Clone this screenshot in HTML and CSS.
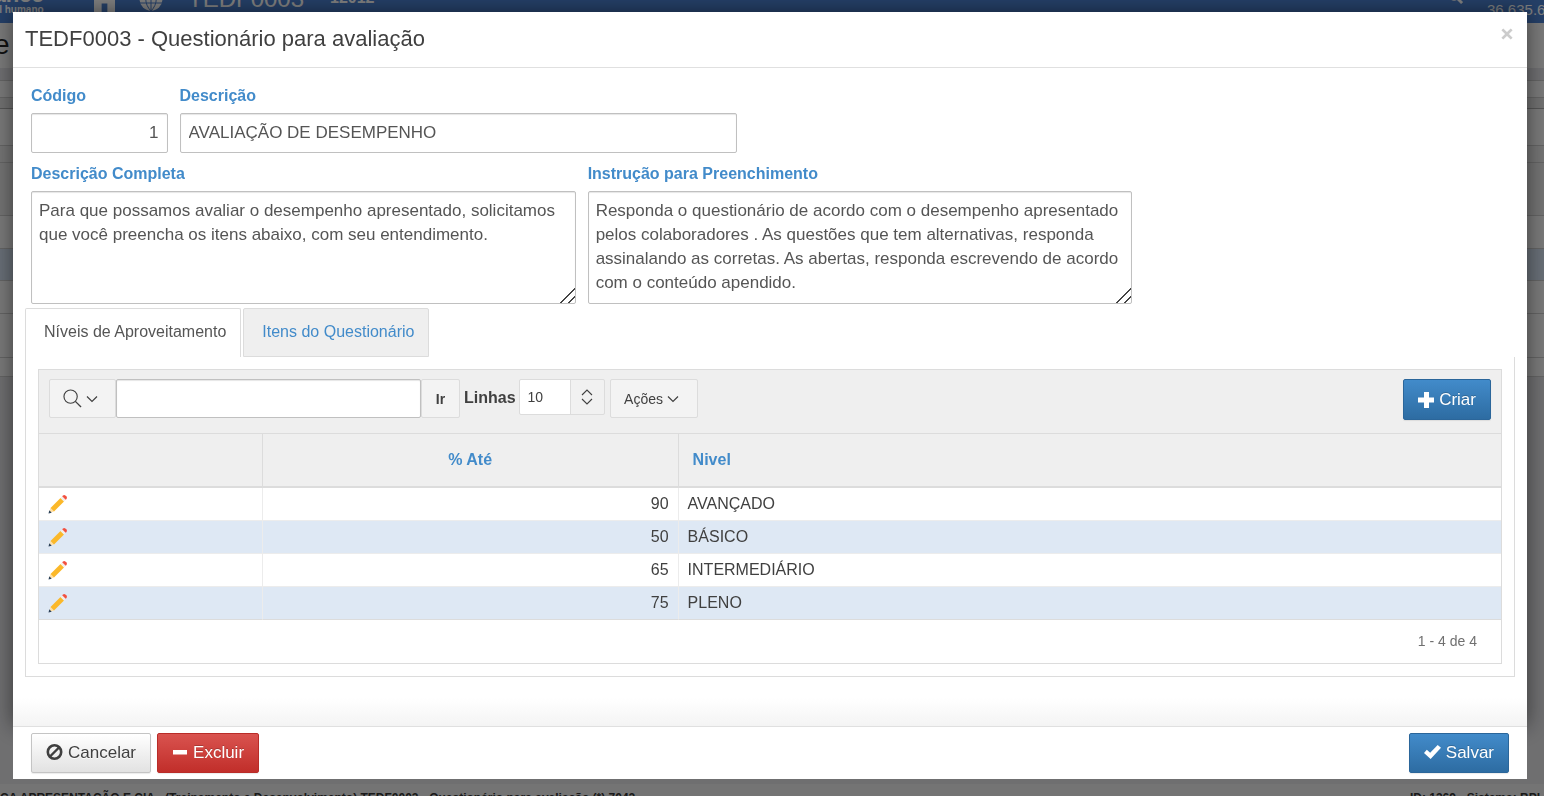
FILE: index.html
```html
<!DOCTYPE html>
<html lang="pt-BR">
<head>
<meta charset="utf-8">
<title>TEDF0003 - Questionário para avaliação</title>
<link rel="stylesheet" href="styles.css">
</head>
<body>
<svg class="sprite" aria-hidden="true">
  <symbol id="pencil" viewBox="0 0 20 20">
    <path d="M1 19l1.500-5L6 17.500z" fill="#ffdfa6"/>
    <path d="M2.500 14L12.500 4l3.500 3.500L6 17.500z" fill="#fbb829"/>
    <path d="M12.500 4l1.700-1.700 3.500 3.500L16 7.500z" fill="#f3eee8"/>
    <path d="M14.200 2.300l.8-.8q1.200-1 2.400 0l1.100 1.100q1 1.200 0 2.400l-.8.8z" fill="#f2503f"/>
    <path d="M.5 19.500l.8-3.200 2.400 2.400z" fill="#2b4158"/>
  </symbol>
  <symbol id="chevron" viewBox="0 0 12 12">
    <path d="M1 3.500l5 5 5-5" fill="none" stroke="currentColor" stroke-width="1.200"/>
  </symbol>
</svg>

<div class="page">
  <header class="topbar">
    <div class="brand"><span class="brand-name">avance</span><span class="brand-sub">capital humano</span></div>
    <svg class="icon-home" viewBox="0 0 22 22"><path d="M11 0l11 9v13h-8v-9H8v9H0V9z" fill="currentColor"/></svg>
    <svg class="icon-globe" viewBox="0 0 24 24"><circle cx="12" cy="12" r="11.500" fill="currentColor"/><path d="M12 0v24M0 8h24M1 16h22M12 0c-7 7-7 17 0 24M12 0c7 7 7 17 0 24" fill="none" class="globe-lines"/></svg>
    <span class="app-code">TEDF0003</span>
    <span class="app-version">12012</span>
    <svg class="icon-search" viewBox="0 0 16 16"><path d="M10 10l5 5" stroke="currentColor" stroke-width="3"/><circle cx="6.500" cy="6.500" r="5" fill="none" stroke="currentColor" stroke-width="2"/></svg>
    <span class="session">36.635.650</span>
  </header>
  <div class="heading">Te</div>
  <div class="strip strip-bar"></div>
  <div class="strip strip-a"></div>
  <div class="strip strip-b"></div>
  <div class="strip strip-c"></div>
  <div class="strip strip-d"></div>
  <div class="strip strip-e"></div>
  <div class="strip strip-f"></div>
  <div class="strip strip-on"></div>
  <div class="strip strip-f"></div>
  <div class="strip strip-g"></div>
  <div class="strip strip-h"></div>
  <footer class="statusbar"><span class="status-left">ÇA APRESENTAÇÃO E CIA - (Treinamento e Desenvolvimento) TEDF0003 - Questionário para avaliação (*) 7042</span><span class="status-right">ID: 1369 - Sistema: BPI</span></footer>
</div>

<div class="overlay">
  <section class="dialog" role="dialog" aria-labelledby="dialog-title">
    <div class="dialog-main">
      <header class="dialog-header">
        <h1 id="dialog-title">TEDF0003 - Questionário para avaliação</h1>
        <button class="close" type="button" aria-label="Fechar"><svg viewBox="0 0 12 12"><path d="M2.500 2.500l7 7M9.500 2.500l-7 7" stroke="currentColor" stroke-width="2"/></svg></button>
      </header>
      <div class="dialog-body">
        <form class="fields">
          <div class="field field-code"><label for="codigo">Código</label><input id="codigo" type="text" value="1"></div>
          <div class="field field-desc"><label for="descricao">Descrição</label><input id="descricao" type="text" value="AVALIAÇÃO DE DESEMPENHO"></div>
          <div class="field field-area"><label for="completa">Descrição Completa</label><textarea id="completa">Para que possamos avaliar o desempenho apresentado, solicitamos que você preencha os itens abaixo, com seu entendimento.</textarea></div>
          <div class="field field-area"><label for="instrucao">Instrução para Preenchimento</label><textarea id="instrucao">Responda o questionário de acordo com o desempenho apresentado pelos colaboradores . As questões que tem alternativas, responda assinalando as corretas. As abertas, responda escrevendo de acordo com o conteúdo apendido.</textarea></div>
        </form>

        <nav class="tabs">
          <a class="tab tab-active" href="#niveis">Níveis de Aproveitamento</a>
          <a class="tab" href="#itens">Itens do Questionário</a>
        </nav>
        <div class="panel" id="niveis">
          <div class="report">
            <div class="toolbar">
              <div class="search">
                <button class="tool search-menu" type="button" aria-label="Pesquisar"><svg class="glass" viewBox="0 0 20 20"><circle cx="8" cy="8" r="7" fill="none" stroke="currentColor" stroke-width="1.200"/><path d="M13 13l6 6" stroke="currentColor" stroke-width="1.400"/></svg><svg class="chev"><use href="#chevron"/></svg></button>
                <input class="search-text" type="text" aria-label="Texto da pesquisa">
                <button class="tool go" type="button">Ir</button>
              </div>
              <label class="rows-label" for="linhas">Linhas</label>
              <div class="rows">
                <select id="linhas"><option>10</option></select>
                <svg class="updown" viewBox="0 0 12 16"><path d="M1 6l5-5 5 5M1 10l5 5 5-5" fill="none" stroke="currentColor" stroke-width="1.100"/></svg>
              </div>
              <button class="tool actions" type="button">Ações <svg class="chev"><use href="#chevron"/></svg></button>
              <button class="btn btn-blue create" type="button"><svg class="bi" viewBox="0 0 16 16"><path d="M6 0h5v5.500h5v5h-5V16H6v-5.500H0v-5h6z" fill="currentColor"/></svg>Criar</button>
            </div>
            <table>
              <colgroup><col class="col-edit"><col class="col-until"><col></colgroup>
              <thead><tr><th aria-label="Editar"></th><th class="center">% Até</th><th>Nivel</th></tr></thead>
              <tbody>
                <tr><td><a href="#e1" aria-label="Editar"><svg class="pen"><use href="#pencil"/></svg></a></td><td class="num">90</td><td>AVANÇADO</td></tr>
                <tr><td><a href="#e2" aria-label="Editar"><svg class="pen"><use href="#pencil"/></svg></a></td><td class="num">50</td><td>BÁSICO</td></tr>
                <tr><td><a href="#e3" aria-label="Editar"><svg class="pen"><use href="#pencil"/></svg></a></td><td class="num">65</td><td>INTERMEDIÁRIO</td></tr>
                <tr><td><a href="#e4" aria-label="Editar"><svg class="pen"><use href="#pencil"/></svg></a></td><td class="num">75</td><td>PLENO</td></tr>
              </tbody>
            </table>
            <div class="pagination">1 - 4 de 4</div>
          </div>
        </div>
      </div>
    </div>
    <footer class="dialog-footer">
      <button class="btn btn-plain" type="button"><svg class="bi bi-ban" viewBox="0 0 16 16"><circle cx="8" cy="8" r="6.700" fill="none" stroke="currentColor" stroke-width="2.600"/><path d="M3.500 12.500l9-9" stroke="currentColor" stroke-width="2.400"/></svg>Cancelar</button>
      <button class="btn btn-red" type="button"><svg class="bi bi-minus" viewBox="0 0 16 16"><path d="M1 6h14v4.500H1z" fill="currentColor"/></svg>Excluir</button>
      <button class="btn btn-blue save" type="button"><svg class="bi bi-ok" viewBox="0 0 18 16"><path d="M0 9l3-3.500 3.500 3.200L14.500.5l3.500 3L7 15.500z" fill="currentColor"/></svg>Salvar</button>
    </footer>
  </section>
</div>
</body>
</html>
```

FILE: styles.css
```css
* { box-sizing: border-box; }
body { margin: 0; height: 100vh; overflow: hidden; font-family: "Liberation Sans", Arial, sans-serif; font-size: 16px; color: #404040; }
button, input, select, textarea { font: inherit; color: inherit; margin: 0; }
button { cursor: pointer; }
a { text-decoration: none; color: #428bca; }
.sprite { position: absolute; width: 0; height: 0; }

/* page behind the dialog */
.page { height: 100vh; display: flex; flex-direction: column; background: #dedee1; overflow: hidden; }
.topbar { position: relative; flex: none; height: 23px; background: #4a7fcf; color: #fff; overflow: hidden; }
.topbar > * { position: absolute; }
.brand { left: -31px; top: -16px; display: flex; flex-direction: column; align-items: flex-end; }
.brand-name { font-size: 22px; line-height: 22px; font-weight: bold; }
.brand-sub { font-size: 10px; line-height: 8px; font-weight: bold; }
.icon-home { left: 94px; top: -9px; width: 21px; height: 21px; }
.icon-globe { left: 139px; top: -13px; width: 24px; height: 24px; }
.globe-lines { stroke: #4a7fcf; }
.app-code { left: 188px; top: -15px; font-size: 24px; line-height: 28px; }
.app-version { left: 330px; top: -11px; font-size: 16px; line-height: 18px; font-weight: bold; }
.icon-search { left: 1448px; top: -11px; width: 15px; height: 15px; }
.session { left: 1487px; top: 1px; font-size: 15px; line-height: 18px; }
.heading { flex: none; height: 45px; background: #f5f5f5; font-size: 28px; line-height: 44px; color: #222; margin-left: -20px; }
.strip { flex: none; border-bottom: 1px solid #c8c8c8; background: #f3f3f3; }
.strip-bar { height: 13px; background: #dedee3; }
.strip-a { height: 17px; }
.strip-b { height: 11px; background: #e2e2e2; border-color: #aaa; }
.strip-c { height: 37px; }
.strip-d { height: 17px; background: #e8e8e8; }
.strip-e { height: 53px; background: #e6e6e6; }
.strip-f { height: 33px; }
.strip-on { height: 32px; background: #d0dded; }
.strip-g { height: 44px; }
.strip-h { height: 19px; }
.statusbar { flex: none; display: flex; justify-content: space-between; height: 12px; margin-top: auto; background: #e8e8e8; overflow: hidden; color: #333; font-size: 12px; line-height: 14px; font-weight: bold; padding-top: 7px; }
.status-right { margin-right: 4px; }

/* dialog */
.overlay { position: fixed; inset: 0; display: flex; padding: 12px 17px 17px 13px; background: rgba(0, 0, 0, .5); }
.dialog { flex: 1; display: flex; flex-direction: column; min-width: 0; }
.dialog-main { flex: 1; display: flex; flex-direction: column; background: #fff; box-shadow: 0 0 20px rgba(0, 0, 0, .5); }
.dialog-header { display: flex; justify-content: space-between; height: 56px; padding: 14px 12px 0; border-bottom: 1px solid #e0e0e0; }
.dialog-header h1 { margin: 0; font-size: 22px; line-height: 26px; font-weight: normal; }
.close { width: 16px; height: 16px; padding: 0; border: 0; background: none; color: #ccc; }
.close svg { display: block; width: 16px; height: 16px; }
.dialog-body { flex: 1; padding: 12px; background: linear-gradient(to top, #f4f4f4, #fff 28px); }
.dialog-footer { position: relative; display: flex; gap: 6px; padding: 6px 18px; background: #fff; border-top: 1px solid #e0e0e0; }

.fields { display: flex; flex-wrap: wrap; column-gap: 12px; padding-left: 6px; }
.field { display: flex; flex-direction: column; }
.field label { height: 33px; line-height: 32px; font-weight: bold; color: #428bca; }
.field input, .field textarea { border: 1px solid #c0c0c0; border-radius: 2px; background: #fff; color: #555; padding: 0 8px; box-shadow: inset 0 1px 1px rgba(0, 0, 0, .1); font-size: 17px; }
.field input { width: 100%; height: 40px; margin-bottom: 5px; }
.field textarea { display: block; width: 100%; height: 113px; padding: 7px; line-height: 24px; }
.field textarea::-webkit-resizer { background: linear-gradient(135deg, transparent 48%, #444 48% 56%, transparent 56% 74%, #444 74% 82%, transparent 82%); }
.field-code { width: 9.2%; }
.field-code input { text-align: right; }
.field-desc { width: 37.6%; margin-right: 40%; }
.field-area { width: 36.7%; }

.tabs { display: flex; gap: 2px; margin-top: 4px; }
.tab { height: 49px; padding: 0 14px 0 18px; line-height: 46px; border: 1px solid #dcdcdc; border-radius: 2px 2px 0 0; background: #efefef; }
.tab-active { background: #fff; border-bottom: 0; color: #555; }
.panel { padding: 12px; border: 1px solid #dcdcdc; border-top: 0; }
.report { border: 1px solid #dcdcdc; background: #fff; }
.toolbar { display: flex; align-items: flex-start; height: 63px; padding: 9px 10px; background: #efefef; }
.tool { display: flex; align-items: center; justify-content: center; gap: 4px; height: 39px; padding: 0 4px 0 0; border: 1px solid #dcdcdc; border-radius: 2px; background: #f3f3f3; font-size: 14px; }
.search { display: flex; }
.search-menu { width: 67px; }
.search-text { width: 305px; height: 39px; border: 1px solid #c0c0c0; border-radius: 2px; background: #fff; box-shadow: inset 0 1px 1px rgba(0, 0, 0, .1); }
.go { width: 39px; padding: 0; font-weight: bold; }
.glass { width: 19px; height: 19px; }
.chev { width: 12px; height: 12px; }
.rows-label { margin: 0 3px 0 4px; line-height: 37px; font-weight: bold; }
.rows { position: relative; }
.rows select { appearance: none; display: block; width: 86px; height: 36px; padding: 0 8px; border: 1px solid #dcdcdc; border-radius: 2px; background: linear-gradient(to right, #fff 50px, #dcdcdc 50px 51px, #f1f1f1 51px); font-size: 14px; }
.updown { position: absolute; right: 12px; top: 10px; width: 12px; height: 16px; pointer-events: none; }
.actions { width: 88px; margin-left: 5px; }

table { width: 100%; table-layout: fixed; border-collapse: separate; border-spacing: 0; }
.col-edit { width: 15.3%; }
.col-until { width: 28.45%; }
th { height: 55px; padding: 0 14px; border-top: 1px solid #dcdcdc; border-bottom: 2px solid #dcdcdc; border-right: 1px solid #dcdcdc; background: #efefef; color: #428bca; text-align: left; }
th.center { text-align: center; }
td { height: 33px; padding: 0 9px; border-bottom: 1px solid #ececec; border-right: 1px solid #ececec; line-height: 20px; }
th:last-child, td:last-child { border-right: 0; }
tbody tr:nth-child(even) { background: #dee8f4; }
tbody tr:last-child td { border-bottom-color: #dcdcdc; }
.num { text-align: right; }
.pen { display: block; width: 20px; height: 20px; }
.pagination { padding: 9px 24px 10px; line-height: 24px; text-align: right; font-size: 14px; color: #707070; }

.btn { display: flex; align-items: center; justify-content: center; gap: 5px; height: 40px; padding: 0 14px; border: 1px solid #c4c4c4; border-radius: 2px; font-size: 17px; line-height: 20px; box-shadow: 0 1px 1px rgba(0, 0, 0, .08); text-shadow: 0 1px 0 rgba(255, 255, 255, .8); }
.btn-plain { background: linear-gradient(#fff, #e2e2e2); }
.btn-red, .btn-blue { color: #fff; text-shadow: 0 -1px 0 rgba(0, 0, 0, .2); }
.btn-red { border-color: #b92c28; background: linear-gradient(#d9534f, #c12e2a); }
.btn-blue { border-color: #2b669a; background: linear-gradient(#428bca, #2d6ca2); }
.create, .save { margin-left: auto; }
.create { height: 41px; }
.bi { width: 16px; height: 16px; }
.bi-ban, .bi-ok { width: 17px; margin-bottom: 3px; }
.bi-minus { margin-bottom: 2px; }
```
